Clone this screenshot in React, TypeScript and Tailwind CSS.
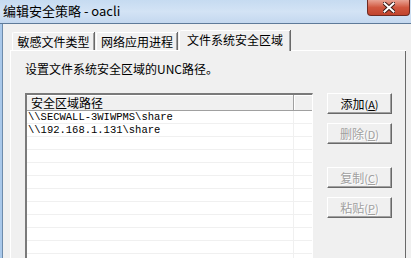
const cjk = '"Noto Sans CJK SC", "Noto Sans", sans-serif';

function Tab({ label, active = false, w }: { label: string; active?: boolean; w: string }) {
  if (active) {
    return (
      <div
        className={`${w} h-[21px] -mb-[1px] relative z-10 bg-[#f0f0f0] border-t border-l border-white rounded-tl-[2px] shadow-[inset_-1px_0_0_#a0a0a0,1px_0_0_#696969] flex items-start justify-center pt-[1px] text-[12px] leading-[16px] text-black`}
      >
        {label}
      </div>
    );
  }
  return (
    <div
      className={`${w} h-[18px] bg-[#f0f0f0] border-t border-l border-white rounded-tl-[2px] shadow-[inset_-1px_0_0_#a0a0a0,1px_0_0_#696969] flex items-start justify-center pt-[1px] text-[12px] leading-[15px] text-black`}
    >
      {label}
    </div>
  );
}

function Btn({ label, hot, rest, disabled = false, className = '' }: { label: string; hot: string; rest: string; disabled?: boolean; className?: string }) {
  return (
    <div
      className={`w-[65px] h-[21px] border-t border-l border-white border-r border-b border-r-[#696969] border-b-[#696969] shadow-[inset_-1px_-1px_0_#a0a0a0] bg-[#f0f0f0] flex items-center justify-center text-[12px] leading-[14px] ${
        disabled ? 'text-[#a0a0a0] [text-shadow:1px_1px_0_#ffffff]' : 'text-black'
      } ${className}`}
    >
      {label}
      <span className="text-[11px]">
        (<span className="underline">{hot}</span>){rest}
      </span>
    </div>
  );
}

export default function App() {
  const rows = ['\\\\SECWALL-3WIWPMS\\share', '\\\\192.168.1.131\\share'];
  return (
    <div className="w-[411px] h-[258px] overflow-hidden flex flex-col bg-[#f0f0f0]" style={{ fontFamily: cjk }}>
      {/* Title bar */}
      <div className="h-[23px] flex items-start bg-gradient-to-b from-[#c6dbf1] via-[#d3e3f5] to-[#c4d8ef]">
        <div className="pl-[3px] pt-[2px] text-[13px] leading-[18px] text-black">编辑安全策略 - oacli</div>
        <div className="ml-auto mr-[1px] w-[43px] h-[16px] rounded-b-[4px] border border-t-0 border-[#6e2b22] bg-gradient-to-b from-[#e8a293] via-[#d0573f] to-[#c1442e] flex items-center justify-center">
          <svg width="12" height="11" viewBox="0 0 12 11">
            <path d="M1.5 1.5 L10.5 9.5 M10.5 1.5 L1.5 9.5" stroke="#3a1a16" strokeWidth="4" strokeLinecap="square" />
            <path d="M1.5 1.5 L10.5 9.5 M10.5 1.5 L1.5 9.5" stroke="#ffffff" strokeWidth="2" strokeLinecap="square" />
          </svg>
        </div>
      </div>
      <div className="h-[1px] bg-[#5e7a99]" />

      {/* Body */}
      <div className="flex-1 flex min-h-0">
        <div className="w-[2px] bg-[#a9c8ea]" />
        <div className="w-[1px] bg-[#6d8bab]" />
        <div className="flex-1 flex flex-col pl-[7px] pt-[6px] min-h-0">
          {/* Tab strip */}
          <div className="h-[20px] flex items-end pl-[2px]">
            <Tab label="敏感文件类型" w="w-[82px]" />
            <div className="w-[2px]" />
            <Tab label="网络应用进程" w="w-[81px]" />
            <div className="w-[2px]" />
            <Tab label="文件系统安全区域" active w="w-[111px]" />
          </div>

          {/* Panel */}
          <div className="w-[396px] flex-1 border-t border-l border-white shadow-[inset_-1px_0_0_#a0a0a0,inset_-2px_0_0_#f0f0f0] relative">
            <div className="absolute right-0 top-0 bottom-0 w-[1px] bg-[#696969]" />
            <div className="pl-[14px] pt-[11px] text-[12px] leading-[14px] text-black">
              设置文件系统安全区域的UNC路径。
            </div>
            <div className="flex pl-[14px] mt-[17px]">
              {/* List view */}
              <div className="w-[288px] h-[170px] border-t-2 border-l-2 border-[#7a7a7a] border-r border-r-white bg-white flex flex-col">
                <div className="h-[16px] flex bg-[#f0f0f0] border-b border-[#a0a0a0] shadow-[inset_0_1px_0_#ffffff]">
                  <div className="w-[267px] border-r border-[#a0a0a0] shadow-[1px_0_0_#ffffff] pl-[4px] text-[12px] leading-[15px] text-black">
                    安全区域路径
                  </div>
                  <div className="flex-1" />
                </div>
                {Array.from({ length: 12 }).map((_, i) => (
                  <div key={i} className="h-[13px] flex border-b border-[#f0f0f0] shrink-0">
                    <div
                      className="w-[267px] border-r border-[#f0f0f0] pl-[1px] text-[10.5px] leading-[12px] text-black"
                      style={{ fontFamily: '"Liberation Mono", monospace' }}
                    >
                      {rows[i] ?? ''}
                    </div>
                    <div className="flex-1" />
                  </div>
                ))}
              </div>

              {/* Buttons */}
              <div className="ml-[14px] flex flex-col">
                <Btn label="添加" hot="A" rest="" />
                <Btn label="删除" hot="D" rest="" disabled className="mt-[9px]" />
                <Btn label="复制" hot="C" rest="" disabled className="mt-[23px]" />
                <Btn label="粘贴" hot="P" rest="" disabled className="mt-[9px]" />
              </div>
            </div>
          </div>
        </div>
      </div>
    </div>
  );
}
